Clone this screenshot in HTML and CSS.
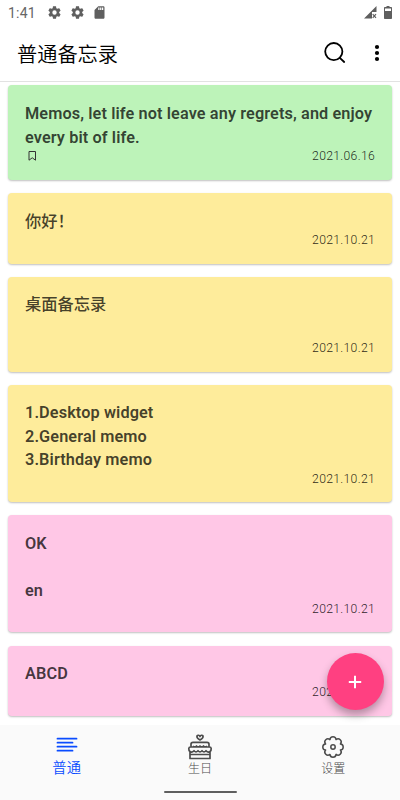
FILE: index.html
```html
<!DOCTYPE html>
<html lang="zh-CN">
<head>
  <meta charset="UTF-8" />
  <meta name="viewport" content="width=device-width, initial-scale=1.0"/>
  <title>普通备忘录</title>
  <link rel="stylesheet" href="styles.css">
</head>
<body>
  <div class="status-bar">
    <span class="time">1:41</span>
    <svg class="gear" viewBox="0 0 24 24"><path d="M19.43 12.98c.04-.32.07-.64.07-.98s-.03-.66-.07-.98l2.11-1.65c.19-.15.24-.42.12-.64l-2-3.46c-.12-.22-.39-.3-.61-.22l-2.49 1c-.52-.4-1.08-.73-1.69-.98l-.38-2.65C14.46 2.18 14.25 2 14 2h-4c-.25 0-.46.18-.49.42l-.38 2.65c-.61.25-1.17.59-1.69.98l-2.49-1c-.23-.09-.49 0-.61.22l-2 3.46c-.13.22-.07.49.12.64l2.11 1.65c-.04.32-.07.65-.07.98s.03.66.07.98l-2.11 1.65c-.19.15-.24.42-.12.64l2 3.46c.12.22.39.3.61.22l2.49-1c.52.4 1.08.73 1.69.98l.38 2.65c.03.24.24.42.49.42h4c.25 0 .46-.18.49-.42l.38-2.65c.61-.25 1.17-.59 1.69-.98l2.49 1c.23.09.49 0 .61-.22l2-3.46c.12-.22.07-.49-.12-.64l-2.11-1.65zM12 15.500a3.500 3.500 0 1 1 0-7 3.500 3.500 0 0 1 0 7z"/></svg>
    <svg class="gear" viewBox="0 0 24 24"><path d="M19.43 12.98c.04-.32.07-.64.07-.98s-.03-.66-.07-.98l2.11-1.65c.19-.15.24-.42.12-.64l-2-3.46c-.12-.22-.39-.3-.61-.22l-2.49 1c-.52-.4-1.08-.73-1.69-.98l-.38-2.65C14.46 2.18 14.25 2 14 2h-4c-.25 0-.46.18-.49.42l-.38 2.65c-.61.25-1.17.59-1.69.98l-2.49-1c-.23-.09-.49 0-.61.22l-2 3.46c-.13.22-.07.49.12.64l2.11 1.65c-.04.32-.07.65-.07.98s.03.66.07.98l-2.11 1.65c-.19.15-.24.42-.12.64l2 3.46c.12.22.39.3.61.22l2.49-1c.52.4 1.08.73 1.69.98l.38 2.65c.03.24.24.42.49.42h4c.25 0 .46-.18.49-.42l.38-2.65c.61-.25 1.17-.59 1.69-.98l2.49 1c.23.09.49 0 .61-.22l2-3.46c.12-.22.07-.49-.12-.64l-2.11-1.65zM12 15.500a3.500 3.500 0 1 1 0-7 3.500 3.500 0 0 1 0 7z"/></svg>
    <svg class="sd" viewBox="0 0 24 24"><path d="M18 2h-8L4.020 8 4 20c0 1.100.9 2 2 2h12c1.100 0 2-.9 2-2V4c0-1.100-.9-2-2-2zm-6 6h-2V4h2v4zm3 0h-2V4h2v4zm3 0h-2V4h2v4z"/></svg>
    <svg class="signal" viewBox="0 0 13 13"><path d="M12.500 0v6H8v6.500H0z"/><path class="cross" d="M8.700 8.200l3.300 3.600M12 8.200l-3.300 3.600"/></svg>
    <svg class="battery" viewBox="0 0 8 13"><path d="M2.500 0h3v1H7c.6 0 1 .4 1 1v10c0 .6-.4 1-1 1H1c-.6 0-1-.4-1-1V2c0-.6.4-1 1-1h1.500zM1 2.500V5h6V2.500z"/></svg>
  </div>

  <header>
    <h1>普通备忘录</h1>
    <svg class="search" viewBox="0 0 22 22"><circle cx="9.800" cy="9.600" r="8.600"/><path d="M15.800 15.800l4.400 4.200"/></svg>
    <svg class="more" viewBox="0 0 6 18"><circle cx="3" cy="3" r="2.100"/><circle cx="3" cy="9" r="2.100"/><circle cx="3" cy="15" r="2.100"/></svg>
  </header>

  <main>
    <section class="card green">
      <p>Memos, let life not leave any regrets, and enjoy<br>every bit of life.</p>
      <div class="info">
        <svg class="bookmark" viewBox="0 0 9 10"><path d="M1 .5h6.500v8.700L4.250 6.800 1 9.200z"/></svg>
        <time>2021.06.16</time>
      </div>
    </section>
    <section class="card yellow short">
      <p class="zh">你好！</p>
      <div class="info"><time>2021.10.21</time></div>
    </section>
    <section class="card yellow">
      <p class="zh">桌面备忘录</p>
      <div class="info"><time>2021.10.21</time></div>
    </section>
    <section class="card yellow tall">
      <p>1.Desktop widget<br>2.General memo<br>3.Birthday memo</p>
      <div class="info"><time>2021.10.21</time></div>
    </section>
    <section class="card pink tall">
      <p>OK<br><br>en</p>
      <div class="info"><time>2021.10.21</time></div>
    </section>
    <section class="card pink short">
      <p>ABCD</p>
      <div class="info"><time>2021.10.21</time></div>
    </section>
  </main>

  <button class="fab" aria-label="新建">
    <svg viewBox="0 0 14 14"><path d="M7 .8v12.400M.8 7h12.400"/></svg>
  </button>

  <nav>
    <a class="tab active">
      <svg viewBox="0 0 26 26"><path d="M3.500 4.700h19M3.500 8.700h15M3.500 12.700h19M3.500 16.700h15"/></svg>
      <span>普通</span>
    </a>
    <a class="tab cake">
      <svg viewBox="0 0 26 26"><path d="M13 6C10.600 4.700 9.600 3.300 10 2c.6-1.200 2.400-.9 3 .5.600-1.400 2.400-1.700 3-.5.400 1.300-.6 2.700-3 4zM4 13v-2.700c0-1.200.8-2 2-2h14c1.200 0 2 .8 2 2V13M3 17.500c-1-.8-1.300-1.800-1.200-3 .1-1 .8-1.500 1.700-1.500h19c.9 0 1.600.5 1.700 1.500.1 1.200-.2 2.200-1.200 3M3 17.500v7h20v-7M3 20.500h20M6 12q1.750 1.800 3.500 0 1.750 1.800 3.500 0 1.750 1.800 3.500 0 1.750 1.800 3.500 0M3 17.500q2 1.500 4-.8 2 2.300 4 0 2 2.300 4 0 2 2.300 4 0 2 2.300 4 .8"/></svg>
      <span>生日</span>
    </a>
    <a class="tab">
      <svg viewBox="0 0 26 26"><circle cx="13" cy="13" r="2.200"/><path d="M9.940 5.610a3.070 3.070 0 0 1 6.120 0 3.070 3.070 0 0 1 4.330 4.330 3.070 3.070 0 0 1 0 6.120 3.070 3.070 0 0 1-4.330 4.330 3.070 3.070 0 0 1-6.120 0 3.070 3.070 0 0 1-4.330-4.330 3.070 3.070 0 0 1 0-6.120 3.070 3.070 0 0 1 4.330-4.330z"/></svg>
      <span>设置</span>
    </a>
  </nav>
  <div class="home-bar"><span></span></div>
</body>
</html>
```
FILE: styles.css
```css
* { margin: 0; padding: 0; box-sizing: border-box; }
body {
  font-family: Roboto, "Noto Sans CJK SC", sans-serif;
  background: #fff;
  width: 400px;
  height: 800px;
  overflow: hidden;
  display: flex;
  flex-direction: column;
  position: relative;
}
svg {
  display: block;
  flex: none;
}
.status-bar {
  height: 25px;
  padding: 0 8px;
  display: flex;
  align-items: center;
  color: #666;
  fill: #5f5f5f;
}
.time {
  font-size: 14px;
  letter-spacing: 0.2px;
  width: 39px;
}
.gear {
  width: 15px;
  height: 15px;
  margin-right: 8px;
}
.sd {
  width: 15px;
  height: 15px;
  margin-left: -1px;
}
.signal {
  width: 13px;
  height: 13px;
  margin-left: auto;
}
.cross {
  stroke: #5f5f5f;
  stroke-width: 1.2;
}
.battery {
  width: 8px;
  height: 13px;
  margin-left: 7px;
}
header {
  height: 57px;
  padding: 0 20px 0 17px;
  display: flex;
  align-items: center;
  border-bottom: 1px solid #e2e2e2;
}
header h1 {
  flex: 1;
  font-size: 20.2px;
  font-weight: 350;
  color: #000;
}
.search {
  width: 22px;
  height: 22px;
  margin-right: 28px;
  fill: none;
  stroke: #000;
  stroke-width: 1.8;
  stroke-linecap: round;
}
.more {
  width: 6px;
  height: 18px;
}
main {
  flex: 1;
  min-height: 0;
  overflow: hidden;
  padding: 3.4px 8.3px 0;
}
.card {
  height: 94.6px;
  margin-bottom: 13.4px;
  padding: 16.2px 16.7px 17px;
  border-radius: 4px;
  box-shadow: 0 1px 2px rgba(0,0,0,0.25);
  display: flex;
  flex-direction: column;
  justify-content: space-between;
}
.card.short {
  height: 70.5px;
}
.card.tall {
  height: 116.8px;
  padding-bottom: 17.6px;
}
.green {
  padding-top: 16.7px;
  background-color: #bdf3b9;
}
.yellow { background-color: #feec9b; }
.pink { background-color: #ffc7e6; }
.card p {
  font-size: 16.3px;
  font-weight: 600;
  line-height: 23.5px;
  letter-spacing: 0.1px;
  color: rgba(0,0,0,0.74);
  white-space: nowrap;
}
.card p.zh {
  font-weight: 500;
  line-height: 23px;
  letter-spacing: 0;
}
.info {
  height: 14px;
  display: flex;
  align-items: center;
}
.bookmark {
  width: 9px;
  height: 10px;
  margin-left: 3px;
  fill: none;
  stroke: #333;
}
.info time {
  margin-left: auto;
  font-size: 12.2px;
  font-weight: 300;
  letter-spacing: 0.3px;
  color: rgba(0,0,0,0.85);
}
.fab {
  position: absolute;
  left: 326.5px;
  top: 653px;
  width: 57px;
  height: 57px;
  border: none;
  border-radius: 50%;
  background-color: #ff4081;
  box-shadow: 0 5px 9px rgba(0,0,0,0.3);
  display: flex;
  align-items: center;
  justify-content: center;
}
.fab svg {
  width: 14px;
  height: 14px;
  stroke: #fff;
  stroke-width: 2;
}
nav {
  height: 57px;
  background-color: #fafafa;
  display: flex;
}
.tab {
  flex: 1;
  display: flex;
  flex-direction: column;
  align-items: center;
  padding-top: 9px;
  font-size: 12px;
  font-weight: 300;
  line-height: 18px;
  color: #4c4c4c;
}
.tab svg {
  width: 26px;
  height: 26px;
  fill: none;
  stroke: currentColor;
  stroke-width: 1.5;
  stroke-linejoin: round;
}
.tab.active {
  font-size: 14.3px;
  font-weight: 350;
  line-height: 17px;
  color: #0a4cff;
}
.tab.active svg {
  stroke-width: 1.8;
  stroke-linecap: round;
}
.tab.cake svg {
  stroke-width: 1.7;
}
.home-bar {
  height: 18px;
  background-color: #fafafa;
  display: flex;
  justify-content: center;
  padding-top: 9px;
}
.home-bar span {
  width: 73px;
  height: 2px;
  border-radius: 1px;
  background-color: #5f5f5f;
}
```
